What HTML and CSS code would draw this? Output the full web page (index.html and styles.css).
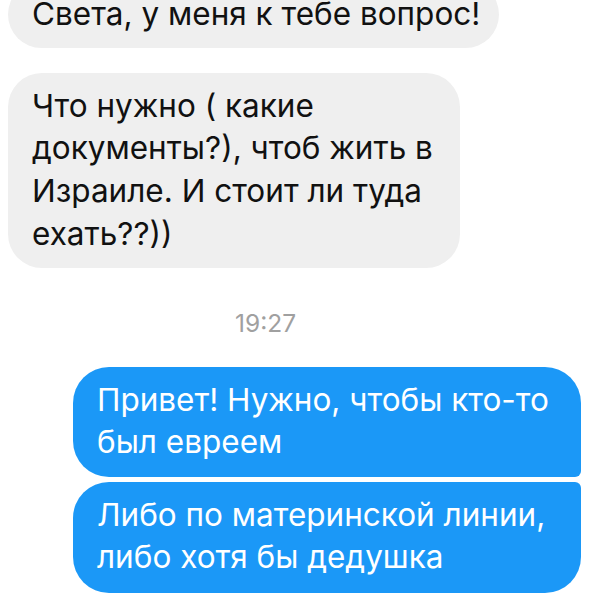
FILE: index.html
```html
<!DOCTYPE html>
<html lang="ru">
<head>
<meta charset="utf-8">
<link rel="stylesheet" href="styles.css">
</head>
<body>
<div class="chat">
  <div class="msg in first">Света, у меня к тебе вопрос!</div>
  <div class="msg in second">Что нужно ( какие<br>документы?), чтоб жить в<br>Израиле. И стоит ли туда<br>ехать??))</div>
  <div class="time">19:27</div>
  <div class="msg out top">Привет! Нужно, чтобы кто-то<br>был евреем</div>
  <div class="msg out bottom">Либо по материнской линии,<br>либо хотя бы дедушка</div>
</div>
</body>
</html>
```
FILE: styles.css
```css
html, body {
  margin: 0;
  padding: 0;
  background: #ffffff;
}
.chat {
  width: 600px;
  height: 600px;
  overflow: hidden;
  display: flex;
  flex-direction: column;
  font-family: "Inter", "Roboto", sans-serif;
  font-size: 31.5px;
  line-height: 42.7px;
}
.msg {
  box-sizing: border-box;
  padding: 12px 24px;
  border-radius: 34px;
  white-space: nowrap;
}
.in {
  align-self: flex-start;
  margin-left: 8px;
  background: #efefef;
  color: #111;
}
.first {
  width: 491px;
  margin-top: -19px;
}
.second {
  width: 452px;
  margin-top: 25px;
}
.time {
  margin-top: 42px;
  padding-left: 235px;
  font-size: 24.5px;
  line-height: 26px;
  color: #a0a0a0;
}
.out {
  align-self: flex-start;
  margin-left: 73px;
  width: 508px;
  background: #1b98f7;
  color: #ffffff;
}
.out.top {
  margin-top: 31px;
  height: 110px;
  border-radius: 36px 36px 6px 36px;
}
.out.bottom {
  margin-top: 5px;
  height: 111px;
  border-radius: 36px 6px 36px 36px;
}
```
